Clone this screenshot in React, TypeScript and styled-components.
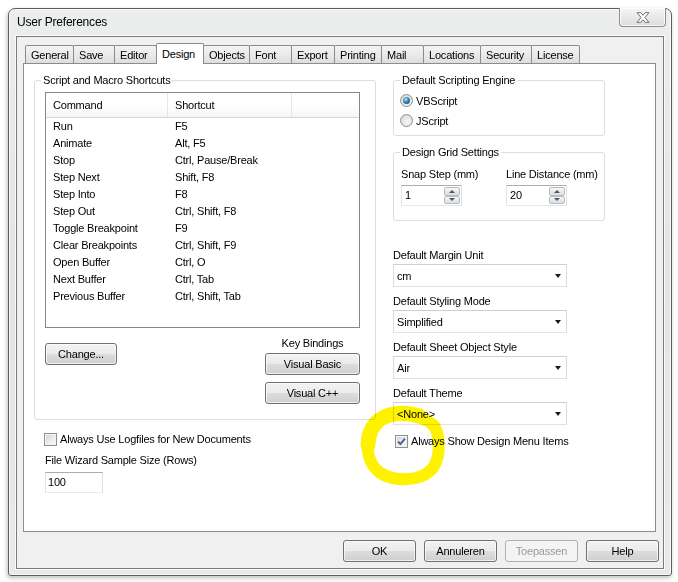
import React from 'react'
import styled, { createGlobalStyle } from 'styled-components'

const GlobalStyle = createGlobalStyle`
  html, body {
    margin: 0;
    padding: 0;
    background: #fff;
  }
  body {
    font-family: 'Liberation Sans', Arial, sans-serif;
    font-size: 11px;
    letter-spacing: -0.2px;
    color: #000;
  }
  * {
    box-sizing: border-box;
  }
`

const Stage = styled.div`
  position: relative;
  width: 678px;
  height: 582px;
  padding: 8px 0 0 8px;
  overflow: hidden;
`

const Window = styled.div`
  width: 664px;
  height: 568px;
  display: flex;
  flex-direction: column;
  border: 1px solid #5c5c5c;
  border-radius: 7px 7px 3px 3px;
  background: linear-gradient(180deg, #eceded 0%, #e3e4e5 45%, #e8e9ea 100%);
  box-shadow: inset 0 0 0 1px rgba(255, 255, 255, 0.75), -1px 2px 4px rgba(0, 0, 0, 0.25);
`

const TitleBar = styled.div`
  height: 27px;
  flex-shrink: 0;
  display: flex;
  justify-content: space-between;
  align-items: flex-start;
  padding: 0 5px 0 8px;
`

const Title = styled.span`
  font-size: 12px;
  line-height: 27px;
`

const CloseButton = styled.div`
  width: 47px;
  height: 19px;
  margin-top: -1px;
  display: flex;
  align-items: center;
  justify-content: center;
  border: 1px solid #8e8e8e;
  border-top: none;
  border-radius: 0 0 4px 4px;
  background: linear-gradient(180deg, #f6f6f6 0%, #e9e9e9 50%, #dcdcdc 100%);
  box-shadow: inset 0 0 0 1px rgba(255, 255, 255, 0.8);
`

const Client = styled.div`
  flex: 1;
  margin: 0 7px 6px 7px;
  display: flex;
  flex-direction: column;
  padding: 6px 4px 0 6px;
  border: 1px solid #7b7b7b;
  background: #f0f0f0;
  box-shadow: 0 0 0 1px #fafafa;
`

const TabStrip = styled.div`
  display: flex;
  align-items: flex-end;
  height: 20px;
  padding-left: 2px;
`

const Tab = styled.div<{ $w: number; $active?: boolean }>`
  position: relative;
  z-index: ${(p) => (p.$active ? 1 : 0)};
  width: ${(p) => p.$w}px;
  height: ${(p) => (p.$active ? 21 : 18)}px;
  margin-bottom: ${(p) => (p.$active ? -1 : 0)}px;
  margin-left: -1px;
  display: flex;
  align-items: center;
  padding: 0 0 ${(p) => (p.$active ? 1 : 0)}px 5px;
  border: 1px solid #898c95;
  border-bottom: none;
  border-radius: 2px 2px 0 0;
  background: ${(p) =>
    p.$active ? '#fff' : 'linear-gradient(180deg, #f4f4f4 0%, #eaeaea 50%, #dedede 100%)'};

  &:first-child {
    margin-left: 0;
  }
`

const Panel = styled.div`
  height: 469px;
  margin-right: 3px;
  display: grid;
  grid-template-columns: 342px 212px;
  column-gap: 17px;
  align-items: start;
  padding: 10px 0 0 10px;
  border: 1px solid #898c95;
  background: #fff;
`

const Column = styled.div`
  display: flex;
  flex-direction: column;
`

const Group = styled.fieldset<{ $mt?: number }>`
  margin: ${(p) => p.$mt || 0}px 0 0 0;
  padding: 0;
  min-width: 0;
  border: 1px solid #d5dfe5;
  border-radius: 3px;
`

const Legend = styled.legend`
  margin-left: 6px;
  padding: 0 2px;
  line-height: 13px;
`

const GroupBody = styled.div<{ $pad: string }>`
  padding: ${(p) => p.$pad};
`

const ListView = styled.div`
  margin-top: 5px;
  height: 236px;
  border: 1px solid #828790;
  background: #fff;
`

const ListHeader = styled.div`
  display: grid;
  grid-template-columns: 122px 124px 1fr;
  height: 25px;
  border-bottom: 1px solid #d5d5d5;
  background: linear-gradient(180deg, #ffffff 0%, #ffffff 50%, #f4f6f7 100%);
`

const HeaderCell = styled.div`
  padding-left: 7px;
  line-height: 24px;
  border-right: 1px solid #e3e8ee;

  &:last-child {
    border-right: none;
  }
`

const ListRow = styled.div`
  display: grid;
  grid-template-columns: 122px 1fr;
  line-height: 17px;
`

const Cell = styled.div`
  padding-left: 7px;
  white-space: nowrap;
`

const ButtonArea = styled.div`
  display: flex;
  justify-content: space-between;
  align-items: flex-start;
`

const KeyBindings = styled.div`
  width: 95px;
  margin-top: 9px;
  display: flex;
  flex-direction: column;
  align-items: center;
`

const Caption = styled.div<{ $mt?: number; $ml?: number }>`
  margin-top: ${(p) => p.$mt || 0}px;
  margin-left: ${(p) => p.$ml || 0}px;
  line-height: 13px;
  white-space: nowrap;
`

const Button = styled.button<{ $w: number; $mt?: number }>`
  width: ${(p) => p.$w}px;
  height: 22px;
  margin-top: ${(p) => p.$mt || 0}px;
  padding: 0;
  font: inherit;
  letter-spacing: inherit;
  color: #000;
  border: 1px solid #707070;
  border-radius: 3px;
  background: linear-gradient(180deg, #f2f2f2 0%, #ebebeb 49%, #dddddd 51%, #cfcfcf 100%);
  box-shadow: inset 0 0 0 1px rgba(255, 255, 255, 0.7);

  &:disabled {
    color: #9a9a9a;
    border-color: #adb2b5;
    background: #f4f4f4;
    box-shadow: none;
  }
`

const CheckRow = styled.label<{ $mt: number; $ml: number }>`
  display: flex;
  align-items: center;
  gap: 3px;
  margin-top: ${(p) => p.$mt}px;
  margin-left: ${(p) => p.$ml}px;
  line-height: 13px;
`

const Box = styled.span`
  width: 13px;
  height: 13px;
  display: flex;
  align-items: center;
  justify-content: center;
  border: 1px solid #8e8f8f;
  background: linear-gradient(135deg, #cfd2d6 0%, #eceeef 60%, #f8f8f8 100%);
  box-shadow: inset 0 0 0 1px #f4f4f4;
`

const RadioRow = styled.div<{ $mt?: number }>`
  display: flex;
  align-items: center;
  gap: 3px;
  height: 17px;
  margin-top: ${(p) => p.$mt || 0}px;
`

const RadioDot = styled.span<{ $on?: boolean }>`
  width: 13px;
  height: 13px;
  display: flex;
  align-items: center;
  justify-content: center;
  border: 1px solid #8e8f8f;
  border-radius: 50%;
  background: radial-gradient(circle at 60% 65%, #f7f7f7 0%, #e2e3e4 55%, #c9cbcd 100%);

  &::after {
    content: '';
    display: ${(p) => (p.$on ? 'block' : 'none')};
    width: 7px;
    height: 7px;
    border-radius: 50%;
    background: radial-gradient(circle at 40% 35%, #b5e6f8 0%, #2d84b4 45%, #0c4768 100%);
  }
`

const GridRow = styled.div`
  display: flex;
`

const GridCol = styled.div<{ $w: number }>`
  width: ${(p) => p.$w}px;
  display: flex;
  flex-direction: column;
`

const SpinBox = styled.div`
  width: 61px;
  height: 21px;
  margin-top: 4px;
  display: flex;
  border: 1px solid;
  border-color: #abadb3 #dbdfe6 #e3e9ef #e2e3ea;
  background: #fff;
`

const SpinText = styled.div`
  flex: 1;
  padding-left: 3px;
  line-height: 19px;
`

const SpinButtons = styled.div`
  width: 17px;
  display: flex;
  flex-direction: column;
  padding: 1px 1px 1px 0;
`

const SpinButton = styled.div`
  flex: 1;
  display: flex;
  align-items: center;
  justify-content: center;
  border: 1px solid #b9bcc1;
  border-radius: 2px;
  background: linear-gradient(180deg, #f7f7f7 0%, #e8e9eb 50%, #dcdee1 100%);
`

const Arrow = styled.span<{ $up?: boolean }>`
  width: 0;
  height: 0;
  border-left: 3px solid transparent;
  border-right: 3px solid transparent;
  ${(p) => (p.$up ? 'border-bottom: 3px solid #4d5766;' : 'border-top: 3px solid #4d5766;')}
`

const FieldLabel = styled.div<{ $mt: number }>`
  margin-top: ${(p) => p.$mt}px;
  margin-bottom: 2px;
  line-height: 14px;
`

const Select = styled.div`
  width: 174px;
  height: 23px;
  display: flex;
  align-items: center;
  justify-content: space-between;
  padding: 0 5px 0 3px;
  border: 1px solid;
  border-color: #cfcfcf #dcdcdc #e2e2e2 #dcdcdc;
  background: #fff;
`

const DropArrow = styled.span`
  width: 0;
  height: 0;
  border-left: 3.5px solid transparent;
  border-right: 3.5px solid transparent;
  border-top: 4px solid #1a1a1a;
`

const TextBox = styled.div`
  width: 58px;
  height: 21px;
  margin: 5px 0 0 11px;
  padding-left: 2px;
  line-height: 19px;
  border: 1px solid;
  border-color: #abadb3 #dbdfe6 #e3e9ef #e2e3ea;
  background: #fff;
`

const DialogButtons = styled.div`
  display: flex;
  justify-content: flex-end;
  gap: 8px;
  margin-top: 8px;
`

const Highlight = styled.svg`
  position: absolute;
  left: 357px;
  top: 405px;
  mix-blend-mode: multiply;
  pointer-events: none;
`

const tabs = [
  { label: 'General', w: 49 },
  { label: 'Save', w: 42 },
  { label: 'Editor', w: 43 },
  { label: 'Design', w: 48, active: true },
  { label: 'Objects', w: 47 },
  { label: 'Font', w: 43 },
  { label: 'Export', w: 44 },
  { label: 'Printing', w: 48 },
  { label: 'Mail', w: 43 },
  { label: 'Locations', w: 58 },
  { label: 'Security', w: 52 },
  { label: 'License', w: 49 },
]

const shortcuts = [
  ['Run', 'F5'],
  ['Animate', 'Alt, F5'],
  ['Stop', 'Ctrl, Pause/Break'],
  ['Step Next', 'Shift, F8'],
  ['Step Into', 'F8'],
  ['Step Out', 'Ctrl, Shift, F8'],
  ['Toggle Breakpoint', 'F9'],
  ['Clear Breakpoints', 'Ctrl, Shift, F9'],
  ['Open Buffer', 'Ctrl, O'],
  ['Next Buffer', 'Ctrl, Tab'],
  ['Previous Buffer', 'Ctrl, Shift, Tab'],
]

const selects = [
  { label: 'Default Margin Unit', value: 'cm' },
  { label: 'Default Styling Mode', value: 'Simplified' },
  { label: 'Default Sheet Object Style', value: 'Air' },
  { label: 'Default Theme', value: '<None>' },
]

const CheckMark = () => (
  <svg width='9' height='9' viewBox='0 0 9 9'>
    <path d='M1 4.6 L3.4 7 L8 1.6' fill='none' stroke='#4a5f97' strokeWidth='1.9' />
  </svg>
)

const Spin = ({ value }: { value: string }) => (
  <SpinBox>
    <SpinText>{value}</SpinText>
    <SpinButtons>
      <SpinButton>
        <Arrow $up />
      </SpinButton>
      <SpinButton>
        <Arrow />
      </SpinButton>
    </SpinButtons>
  </SpinBox>
)

export default function App() {
  return (
    <>
      <GlobalStyle />
      <Stage>
        <Window>
          <TitleBar>
            <Title>User Preferences</Title>
            <CloseButton>
              <svg width='14' height='11' viewBox='0 0 13 10'>
                <path
                  d='M1 0.5 H4.5 L6.5 3 L8.5 0.5 H12 L8.3 5 L12 9.5 H8.5 L6.5 7 L4.5 9.5 H1 L4.7 5 Z'
                  fill='#fff'
                  stroke='#6d6d6d'
                  strokeWidth='0.9'
                  strokeLinejoin='round'
                />
              </svg>
            </CloseButton>
          </TitleBar>
          <Client>
            <TabStrip>
              {tabs.map((t) => (
                <Tab key={t.label} $w={t.w} $active={t.active}>
                  {t.label}
                </Tab>
              ))}
            </TabStrip>
            <Panel>
              <Column>
                <Group>
                  <Legend>Script and Macro Shortcuts</Legend>
                  <GroupBody $pad='0 15px 15px 10px'>
                    <ListView>
                      <ListHeader>
                        <HeaderCell>Command</HeaderCell>
                        <HeaderCell>Shortcut</HeaderCell>
                        <HeaderCell />
                      </ListHeader>
                      {shortcuts.map(([cmd, key]) => (
                        <ListRow key={cmd}>
                          <Cell>{cmd}</Cell>
                          <Cell>{key}</Cell>
                        </ListRow>
                      ))}
                    </ListView>
                    <ButtonArea>
                      <Button $w={72} $mt={15}>
                        Change...
                      </Button>
                      <KeyBindings>
                        <Caption>Key Bindings</Caption>
                        <Button $w={95} $mt={3}>
                          Visual Basic
                        </Button>
                        <Button $w={95} $mt={7}>
                          Visual C++
                        </Button>
                      </KeyBindings>
                    </ButtonArea>
                  </GroupBody>
                </Group>
                <CheckRow $mt={13} $ml={10}>
                  <Box />
                  Always Use Logfiles for New Documents
                </CheckRow>
                <Caption $mt={8} $ml={11}>
                  File Wizard Sample Size (Rows)
                </Caption>
                <TextBox>100</TextBox>
              </Column>

              <Column>
                <Group>
                  <Legend>Default Scripting Engine</Legend>
                  <GroupBody $pad='5px 0 6px 6px'>
                    <RadioRow>
                      <RadioDot $on />
                      VBScript
                    </RadioRow>
                    <RadioRow $mt={3}>
                      <RadioDot />
                      JScript
                    </RadioRow>
                  </GroupBody>
                </Group>
                <Group $mt={10}>
                  <Legend>Design Grid Settings</Legend>
                  <GroupBody $pad='9px 0 14px 7px'>
                    <GridRow>
                      <GridCol $w={105}>
                        <Caption>Snap Step (mm)</Caption>
                        <Spin value='1' />
                      </GridCol>
                      <GridCol $w={95}>
                        <Caption>Line Distance (mm)</Caption>
                        <Spin value='20' />
                      </GridCol>
                    </GridRow>
                  </GroupBody>
                </Group>
                {selects.map((s, i) => (
                  <React.Fragment key={s.label}>
                    <FieldLabel $mt={i === 0 ? 27 : 7}>{s.label}</FieldLabel>
                    <Select>
                      <span>{s.value}</span>
                      <DropArrow />
                    </Select>
                  </React.Fragment>
                ))}
                <CheckRow $mt={10} $ml={2}>
                  <Box>
                    <CheckMark />
                  </Box>
                  Always Show Design Menu Items
                </CheckRow>
              </Column>
            </Panel>
            <DialogButtons>
              <Button $w={73}>OK</Button>
              <Button $w={73}>Annuleren</Button>
              <Button $w={73} disabled>
                Toepassen
              </Button>
              <Button $w={73}>Help</Button>
            </DialogButtons>
          </Client>
        </Window>
        <Highlight width='92' height='86' viewBox='0 0 92 86'>
          <path
            d='M78 22 C66 8, 32 5, 18 19 C7 31, 8 56, 22 67 C36 77, 62 77, 74 65 C83 56, 84 36, 78 22 Z'
            fill='none'
            stroke='#fff200'
            strokeWidth='12'
            strokeLinejoin='round'
          />
          <path
            d='M62 11 C46 6, 28 8, 19 18 C13 25, 11 33, 11 40'
            fill='none'
            stroke='#fff200'
            strokeWidth='15'
            strokeLinecap='round'
          />
        </Highlight>
      </Stage>
    </>
  )
}
